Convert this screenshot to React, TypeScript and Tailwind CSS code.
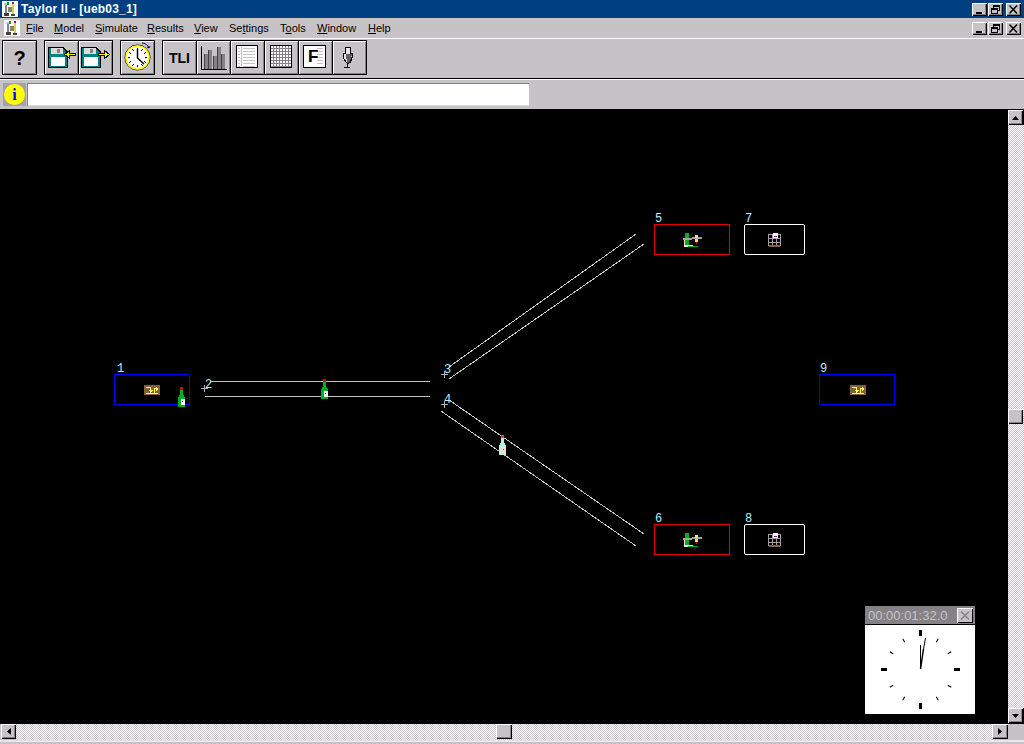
// ReactJS
import { ReactNode } from "react";

// Shared styles
const toolButton =
    "w-[35px] h-[35px] -ml-px first:ml-0 bg-[#c6c3c6] shadow-[inset_0_0_0_1px_#000,inset_1px_1px_0_1px_#fff,inset_-1px_-1px_0_1px_#848284] flex items-center justify-center";
const windowButton =
    "w-[15px] h-[13px] bg-[#c6c3c6] shadow-[inset_1px_1px_0_#fff,inset_-1px_-1px_0_#000,inset_-2px_-2px_0_#848284] flex items-center justify-center";
const scrollButton =
    "w-[15px] h-[15px] bg-[#c6c3c6] shadow-[inset_1px_1px_0_#fff,inset_-1px_-1px_0_#000,inset_-2px_-2px_0_#848284] flex items-center justify-center";
const ditherTrack =
    "bg-[repeating-conic-gradient(#fff_0_25%,#c6c3c6_0_50%)] bg-[length:2px_2px]";

function Icon({ size = 35, box = 35, children }: { size?: number; box?: number; children: ReactNode }) {
    return (
        <svg width={size} height={size} viewBox={`0 0 ${box} ${box}`} shapeRendering="crispEdges" className="block">
            {children}
        </svg>
    );
}

function TaylorIcon() {
    return (
        <svg width="16" height="16" viewBox="0 0 16 16" shapeRendering="crispEdges" className="block">
            <rect width="16" height="16" fill="#fff" />
            <rect x="2" y="2" width="3" height="2" fill="#c6c3c6" />
            <rect x="3" y="4" width="2" height="9" fill="#848284" />
            <rect x="5" y="1" width="2" height="3" fill="#00a000" />
            <rect x="10" y="1" width="2" height="2" fill="#a000a0" />
            <rect x="10" y="3" width="2" height="10" fill="#e0d040" />
            <rect x="6" y="6" width="4" height="5" fill="#848284" />
            <rect x="2" y="12" width="5" height="3" fill="#424142" />
            <rect x="9" y="13" width="4" height="2" fill="#424142" />
        </svg>
    );
}

function WindowControls() {
    return (
        <div className="flex mr-[3px]">
            <div className={windowButton}>
                <svg width="15" height="13" shapeRendering="crispEdges">
                    <rect x="4" y="9" width="6" height="2" fill="#000" />
                </svg>
            </div>
            <div className={windowButton + " ml-px"}>
                <svg width="15" height="13" fill="none" stroke="#000" shapeRendering="crispEdges">
                    <path d="M5.5 4.5V2.5H11.5V7.5H9.5" />
                    <path d="M5 3.5H11" />
                    <rect x="3.5" y="5.5" width="6" height="5" fill="#c6c3c6" />
                    <path d="M3 6.5H10" />
                </svg>
            </div>
            <div className={windowButton + " ml-[3px]"}>
                <svg width="15" height="13" stroke="#000" strokeWidth="1.5">
                    <path d="M3.5 2.5L11 10.5M11 2.5L3.5 10.5" />
                </svg>
            </div>
        </div>
    );
}

function Floppy({ x }: { x: number }) {
    return (
        <g transform={`translate(${x} 7)`}>
            <path d="M0.5 0.5H15L19.5 5V20.5H0.5Z" fill="#008284" stroke="#000" />
            <rect x="3" y="1" width="12" height="6" fill="#dedbde" />
            <rect x="9" y="2" width="3" height="4" fill="#848284" />
            <rect x="3" y="10" width="14" height="9" fill="#fff" />
        </g>
    );
}

function Arrow({ flip, x }: { flip?: boolean; x: number }) {
    const d = flip ? "M0.5 3.5H6.5V0.5L11.5 4.5L6.5 8.5V5.5H0.5Z" : "M11.5 3.5H5.5V0.5L0.5 4.5L5.5 8.5V5.5H11.5Z";
    return <path transform={`translate(${x} 10)`} d={d} fill="#ffff00" stroke="#000" />;
}

function ClockIcon() {
    const marks = [0, 30, 60, 90, 120, 150, 180, 210, 240, 270, 300, 330];
    return (
        <Icon>
            <circle cx="17.5" cy="17.5" r="12.5" fill="#fff" stroke="#000" strokeWidth="1" shapeRendering="auto" />
            <circle cx="17.5" cy="17.5" r="11.5" fill="none" stroke="#ffff00" strokeWidth="1.5" shapeRendering="auto" />
            {marks.map((deg) => (
                <rect key={deg} x="17" y="8" width="1" height="2" fill="#000" transform={`rotate(${deg} 17.5 17.5)`} />
            ))}
            <path d="M17.5 9V18L24 24" fill="none" stroke="#000" strokeWidth="1.5" shapeRendering="auto" />
            <path d="M22 3C25 3 28 5 29 8M29 8L27 7M29 8L30 6" fill="none" stroke="#000084" shapeRendering="auto" />
        </Icon>
    );
}

function ChartIcon() {
    const bars = [
        [8, 14, 15],
        [12, 10, 19],
        [17, 16, 13],
        [21, 7, 22],
        [25, 14, 15],
    ];
    return (
        <Icon>
            <rect x="5" y="6" width="1" height="24" fill="#000" />
            {bars.map(([x, y, h]) => (
                <g key={x}>
                    <rect x={x} y={y} width="4" height={h} fill="#848284" />
                    <rect x={x} y={y} width="1" height={h} fill="#424142" />
                </g>
            ))}
            <rect x="5" y="29" width="26" height="1" fill="#000" />
        </Icon>
    );
}

function ListIcon() {
    const rows = [8, 11, 14, 17, 20, 23, 26];
    return (
        <Icon>
            <rect x="6.5" y="5.5" width="21" height="22" fill="#fff" stroke="#000" />
            <rect x="11" y="7" width="1" height="19" fill="#c6c3c6" />
            {rows.map((y) => (
                <g key={y}>
                    <rect x="8" y={y} width="2" height="1" fill="#c6c3c6" />
                    <rect x="13" y={y} width="12" height="1" fill="#c6c3c6" />
                </g>
            ))}
        </Icon>
    );
}

function GridIcon() {
    const xs = [9, 12, 15, 18, 21, 24];
    const ys = [8, 11, 14, 17, 20, 23, 26];
    return (
        <Icon>
            <rect x="6.5" y="5.5" width="21" height="22" fill="#fff" stroke="#000" />
            {xs.map((x) => (
                <rect key={x} x={x} y="6" width="1" height="21" fill="#848284" />
            ))}
            {ys.map((y) => (
                <rect key={y} x="7" y={y} width="20" height="1" fill="#848284" />
            ))}
        </Icon>
    );
}

function FormulaIcon() {
    const rows = [8, 11, 14, 17, 20, 23];
    return (
        <div className="relative w-[35px] h-[35px]">
            <Icon>
                <rect x="5.5" y="5.5" width="22" height="22" fill="#fff" stroke="#000" />
                {rows.map((y) => (
                    <rect key={y} x="19" y={y} width="6" height="1" fill="#c6c3c6" />
                ))}
            </Icon>
            <span className="absolute left-[10px] top-[7px] text-[17px] leading-[20px] font-bold text-black">F</span>
        </div>
    );
}

function PlugIcon() {
    return (
        <Icon>
            <path d="M13.5 7.5H18.5V13.5H20.5V16L18.5 22L15.5 24L12 19L11.5 15V13.5H13.5Z" fill="#e7e7e7" stroke="#000" />
            <path d="M14 14H20L18 22L15 23Z" fill="#636163" />
            <path d="M12 27.5H18M15 24V28" fill="none" stroke="#000" />
        </Icon>
    );
}

function Bottle({ x, y, light }: { x: number; y: number; light?: boolean }) {
    const body = light ? "#b5f0e0" : "#00b020";
    return (
        <g transform={`translate(${x} ${y})`} shapeRendering="crispEdges">
            <rect x="2" y="0" width="3" height="3" fill={light ? "#e04040" : "#e00000"} />
            <rect x="2" y="3" width="3" height="5" fill={body} />
            <rect x="1" y="8" width="5" height="2" fill={body} />
            <rect x="0" y="10" width="7" height="10" fill={body} />
            <rect x="3" y="12" width="4" height="6" fill={light ? "#ffd8d0" : "#fff"} />
            <rect x="4" y="14" width="1" height="1" fill="#404040" />
        </g>
    );
}

function SourceIcon({ x, y }: { x: number; y: number }) {
    return (
        <g transform={`translate(${x} ${y})`} shapeRendering="crispEdges" stroke="#ffff60" fill="none">
            <rect x="-0.5" y="-0.5" width="16" height="10" fill="#84613a" stroke="none" />
            <path d="M2 2.5H6.5V8.5M4.5 5.5H8.5M5.5 6.5H7.5M2 8.5H14M10.5 8.5V3.5H12.5M12.5 1.5V5.5M13.5 2.5V4.5" />
        </g>
    );
}

function MachineIcon({ x, y }: { x: number; y: number }) {
    return (
        <g transform={`translate(${x} ${y})`} shapeRendering="crispEdges">
            <rect x="2" y="0" width="4" height="5" fill="#00b020" />
            <rect x="0" y="5" width="9" height="2" fill="#a5a2a5" />
            <rect x="9" y="4" width="10" height="2" fill="#a5a2a5" />
            <rect x="12" y="2" width="3" height="3" fill="#e8e860" />
            <rect x="12" y="6" width="3" height="3" fill="#e8e860" />
            <rect x="13" y="9" width="1" height="2" fill="#e00000" />
            <rect x="2" y="7" width="4" height="5" fill="#00b020" />
            <rect x="1" y="7" width="1" height="6" fill="#ffd8d0" />
            <rect x="1" y="12" width="9" height="2" fill="#ffe8d8" />
            <rect x="5" y="13" width="10" height="1" fill="#00b020" />
        </g>
    );
}

function BufferIcon({ x, y }: { x: number; y: number }) {
    const xs = [0, 4, 8, 12];
    const ys = [1, 5, 9];
    return (
        <g transform={`translate(${x} ${y})`} shapeRendering="crispEdges">
            {xs.map((gx) => (
                <rect key={gx} x={gx} y="1" width="1" height="12" fill="#a5a2a5" />
            ))}
            {ys.map((gy) => (
                <rect key={gy} x="0" y={gy} width="13" height="1" fill="#a5a2a5" />
            ))}
            <rect x="5" y="0" width="5" height="5" fill="#fff" />
            <rect x="6" y="3" width="3" height="1" fill="#a000a0" />
            <rect x="1" y="12" width="11" height="2" fill="#84613a" />
        </g>
    );
}

function Cross({ x, y }: { x: number; y: number }) {
    return <path d={`M${x - 3} ${y}.5H${x + 4}M${x}.5 ${y - 3}V${y + 4}`} stroke="#b5b2b5" shapeRendering="crispEdges" />;
}

function Label({ x, y, children }: { x: number; y: number; children: string }) {
    return (
        <text x={x} y={y} fill="#b5f0f7" fontSize="12" fontFamily="Liberation Mono, monospace">
            {children}
        </text>
    );
}

// Drawing of the simulation model, in page coordinates
function ModelDrawing() {
    const conveyors = [
        "M210 381.5H430",
        "M205 396.5H430",
        "M636 234L449 367",
        "M644 244L449 379",
        "M449 400L644 534",
        "M441 411L636 546",
    ];
    return (
        <svg width="1008" height="615" viewBox="0 109 1008 615" className="absolute left-0 top-0 block">
            {conveyors.map((d) => (
                <path key={d} d={d} stroke="#c6c3c6" fill="none" shapeRendering="crispEdges" />
            ))}

            <rect x="114.5" y="374.5" width="75" height="30" fill="none" stroke="#0000ff" shapeRendering="crispEdges" />
            <rect x="819.5" y="374.5" width="75" height="30" fill="none" stroke="#0000ff" shapeRendering="crispEdges" />
            <rect x="654.5" y="224.5" width="75" height="30" fill="none" stroke="#e00000" shapeRendering="crispEdges" />
            <rect x="654.5" y="524.5" width="75" height="30" fill="none" stroke="#e00000" shapeRendering="crispEdges" />
            <rect x="744.5" y="224.5" width="60" height="30" rx="1.5" fill="none" stroke="#fff" />
            <rect x="744.5" y="524.5" width="60" height="30" rx="1.5" fill="none" stroke="#fff" />

            <SourceIcon x={144} y={385} />
            <SourceIcon x={850} y={385} />
            <MachineIcon x={683} y={233} />
            <MachineIcon x={683} y={533} />
            <BufferIcon x={768} y={233} />
            <BufferIcon x={768} y={533} />

            <Bottle x={178} y={387} />
            <Bottle x={321} y={379} />
            <Bottle x={499} y={435} light />

            <Cross x={204} y={388} />
            <Cross x={444} y={374} />
            <Cross x={444} y={404} />

            <Label x={117} y={372}>1</Label>
            <Label x={205} y={388}>2</Label>
            <Label x={444} y={373}>3</Label>
            <Label x={444} y={403}>4</Label>
            <Label x={655} y={222}>5</Label>
            <Label x={655} y={522}>6</Label>
            <Label x={745} y={222}>7</Label>
            <Label x={745} y={522}>8</Label>
            <Label x={820} y={372}>9</Label>
        </svg>
    );
}

function ClockPanel() {
    const small = [30, 60, 120, 150, 210, 240, 300, 330];
    const large = [0, 90, 180, 270];
    return (
        <div className="absolute left-[865px] top-[497px] w-[110px] h-[108px] flex flex-col">
            <div className="h-[18px] bg-[#848284] flex items-center justify-between pl-[3px] pr-[2px]">
                <span className="text-[13px] leading-none text-[#c6c3c6]">00:00:01:32.0</span>
                <div className="w-[16px] h-[15px] bg-[#c6c3c6] shadow-[inset_1px_1px_0_#fff,inset_-1px_-1px_0_#000] flex items-center justify-center">
                    <svg width="16" height="15" stroke="#848284" strokeWidth="1.5">
                        <path d="M4 3.5L12 11.5M12 3.5L4 11.5" />
                    </svg>
                </div>
            </div>
            <div className="mt-px flex-1 bg-white">
                <svg width="110" height="89" viewBox="865 625 110 89" className="block">
                    {large.map((deg) => (
                        <rect key={deg} x="919" y="630" width="3" height="6" fill="#000" transform={`rotate(${deg} 920.5 669.5)`} shapeRendering="crispEdges" />
                    ))}
                    {small.map((deg) => (
                        <rect key={deg} x="920" y="634" width="1" height="4" fill="#000" transform={`rotate(${deg} 920.5 669.5)`} />
                    ))}
                    <path d="M920.5 669L920.5 645" stroke="#000" strokeWidth="1" />
                    <path d="M920.5 669L923.5 649" stroke="#000" strokeWidth="1.5" />
                    <path d="M923.5 649L925.5 638" stroke="#000" strokeWidth="1" />
                </svg>
            </div>
        </div>
    );
}

export default function App() {
    const menus: [string, string, string, string][] = [
        ["", "F", "ile", "w-[28px]"],
        ["", "M", "odel", "w-[41px]"],
        ["", "S", "imulate", "w-[52px]"],
        ["", "R", "esults", "w-[47px]"],
        ["", "V", "iew", "w-[35px]"],
        ["Se", "t", "tings", "w-[51px]"],
        ["T", "o", "ols", "w-[37px]"],
        ["", "W", "indow", "w-[51px]"],
        ["", "H", "elp", "w-[30px]"],
    ];

    return (
        <div className="w-[1024px] h-[744px] overflow-hidden flex flex-col bg-[#c6c3c6] font-['Liberation_Sans',Arial,sans-serif] text-black">
            {/* Title bar */}
            <div className="h-[18px] bg-[#004080] flex items-center pl-[2px] shrink-0">
                <TaylorIcon />
                <span className="ml-[3px] text-[12px] leading-none font-bold text-white tracking-[0.2px]">Taylor II - [ueb03_1]</span>
                <div className="ml-auto">
                    <WindowControls />
                </div>
            </div>

            {/* Menu bar */}
            <div className="h-[21px] border-b border-white flex items-center pl-[4px] shrink-0">
                <div className="mr-[6px]">
                    <TaylorIcon />
                </div>
                {menus.map(([before, key, after, slot]) => (
                    <span key={key + after} className={slot + " text-[11px] leading-none"}>
                        {before}
                        <span className="underline">{key}</span>
                        {after}
                    </span>
                ))}
                <div className="ml-auto">
                    <WindowControls />
                </div>
            </div>

            {/* Toolbar */}
            <div className="h-[39px] flex gap-[7px] pl-[2px] pt-px shrink-0">
                <div className="flex">
                    <div className={toolButton}>
                        <span className="text-[20px] leading-none font-bold">?</span>
                    </div>
                </div>
                <div className="flex">
                    <div className={toolButton}>
                        <Icon>
                            <Floppy x={4} />
                            <Arrow x={20} />
                        </Icon>
                    </div>
                    <div className={toolButton}>
                        <Icon>
                            <Floppy x={3} />
                            <Arrow x={20} flip />
                        </Icon>
                    </div>
                </div>
                <div className="flex">
                    <div className={toolButton}>
                        <ClockIcon />
                    </div>
                </div>
                <div className="flex">
                    <div className={toolButton}>
                        <span className="text-[14px] leading-none font-bold">TLI</span>
                    </div>
                    <div className={toolButton}>
                        <ChartIcon />
                    </div>
                    <div className={toolButton}>
                        <ListIcon />
                    </div>
                    <div className={toolButton}>
                        <GridIcon />
                    </div>
                    <div className={toolButton}>
                        <FormulaIcon />
                    </div>
                    <div className={toolButton}>
                        <PlugIcon />
                    </div>
                </div>
            </div>

            {/* Status row */}
            <div className="h-[31px] border-t border-black shrink-0">
                <div className="h-full border-t border-white flex pl-[3px] pt-[3px] gap-px">
                    <div className="w-[23px] h-[23px] bg-[#a5a2a5] flex items-center justify-center">
                        <div className="w-[21px] h-[21px] rounded-full bg-[#ffff00] flex items-center justify-center font-['Liberation_Serif',serif] text-[16px] leading-none font-bold text-[#0000ff]">
                            i
                        </div>
                    </div>
                    <div className="w-[502px] h-[23px] bg-white border-t border-l border-[#848284] shadow-[inset_0_-1px_0_#dedbde]" />
                </div>
            </div>

            {/* Workspace */}
            <div className="h-[615px] flex shrink-0">
                <div className="relative w-[1008px] bg-black">
                    <ModelDrawing />
                    <ClockPanel />
                </div>
                <div className="w-[16px] flex flex-col bg-black">
                    <div className="h-[1px] shrink-0" />
                    <div className={scrollButton + " shrink-0"}>
                        <svg width="7" height="4"><path d="M3.5 0L7 4H0Z" fill="#000" /></svg>
                    </div>
                    <div className={ditherTrack + " flex-1 pt-[284px]"}>
                        <div className={scrollButton} />
                    </div>
                    <div className={scrollButton + " shrink-0"}>
                        <svg width="7" height="4"><path d="M0 0H7L3.5 4Z" fill="#000" /></svg>
                    </div>
                    <div className="h-[1px] shrink-0" />
                </div>
            </div>

            {/* Horizontal scrollbar */}
            <div className="h-[16px] flex shrink-0 pl-px">
                <div className={scrollButton}>
                    <svg width="4" height="7"><path d="M4 0V7L0 3.5Z" fill="#000" /></svg>
                </div>
                <div className={ditherTrack + " w-[976px] pl-[480px]"}>
                    <div className={scrollButton + " w-[16px]"} />
                </div>
                <div className={scrollButton + " w-[16px]"}>
                    <svg width="4" height="7"><path d="M0 0V7L4 3.5Z" fill="#000" /></svg>
                </div>
            </div>
            <div className="h-[2px] bg-[#e7e7e7] shrink-0" />
        </div>
    );
}
